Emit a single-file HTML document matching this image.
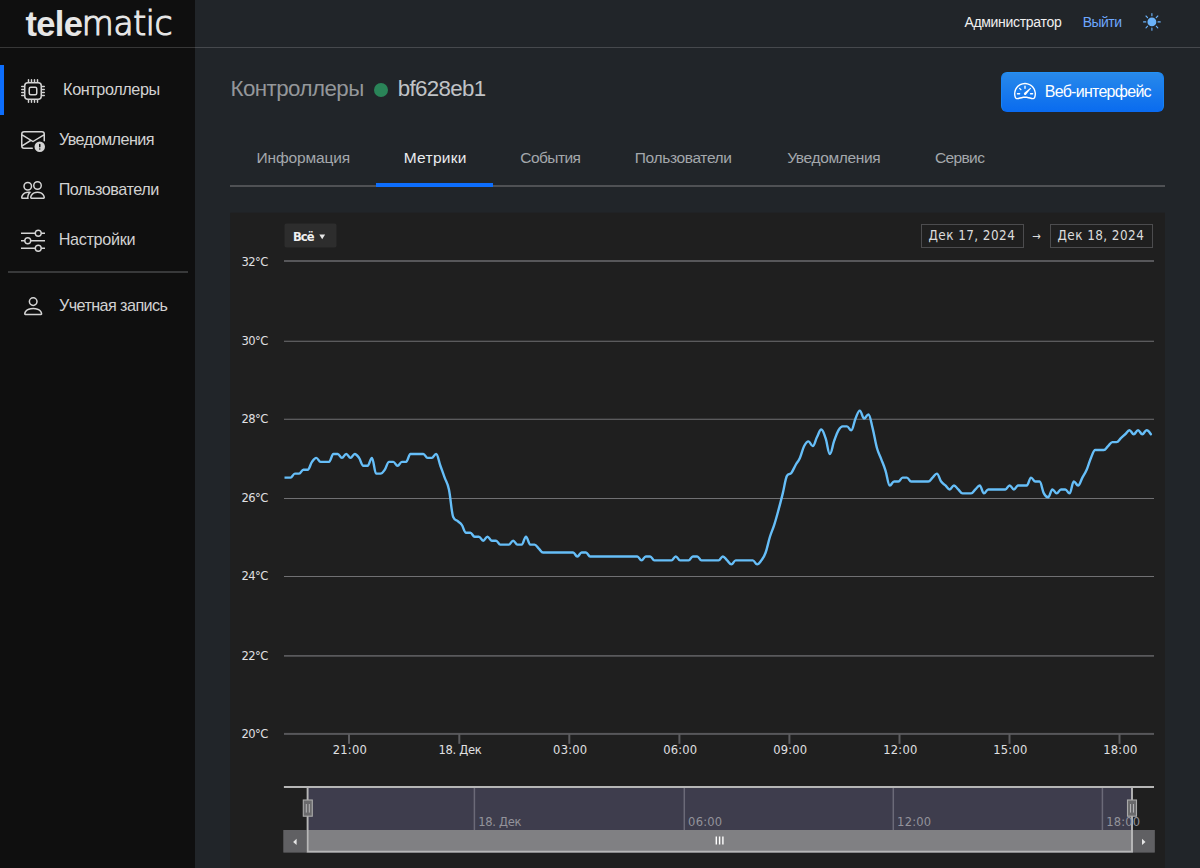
<!DOCTYPE html>
<html lang="ru"><head><meta charset="utf-8"><title>telematic — Контроллеры bf628eb1</title>
<style>
*{box-sizing:border-box}
html,body{margin:0;padding:0}
body{width:1200px;height:868px;overflow:hidden;background:#212529;font-family:'Liberation Sans', sans-serif;color:#dee2e6;position:relative}
.t{position:absolute;white-space:pre;line-height:1;}
.ic{position:absolute;display:block}
.sidebar{position:absolute;left:0;top:0;width:195.2px;height:868px;background:#0f0f0f}
.topline{position:absolute;left:0;top:46.6px;width:1200px;height:1.6px;background:rgba(255,255,255,.17)}
.active-bar{position:absolute;left:0;top:65px;width:3.7px;height:50px;background:#0d6efd}
.sep{position:absolute;left:8px;top:270.9px;width:180px;height:1.7px;background:#38393a}
.nav-t{color:#d2d2d2}
.adm{color:#f0f0f0}
.out{color:#6ea8fe}
.h1a{color:#94979a}
.h1b{color:#c0c3c6}
.dot{position:absolute;left:373.5px;top:82.9px;width:14px;height:14px;border-radius:50%;background:#2a8458}
.btn{position:absolute;left:1001px;top:72.4px;width:163.2px;height:39.8px;border-radius:6px;background:linear-gradient(#2889ea,#0a6cef);border:1px solid;border-color:#2191f7 #1783f5 #0a6af2}
.tabs-line{position:absolute;left:230px;top:185.3px;width:935px;height:1.8px;background:#4f5154}
.tab-active{position:absolute;left:376.4px;top:183.1px;width:116.4px;height:3.8px;background:#0d6efd}
.tab{color:#a4a8ac}
.tab.on{color:#e9ecef}
.panel{position:absolute;left:230px;top:212px;width:935px;height:700px}
.hc{display:block}
.hc text{font-family:'DejaVu Sans', sans-serif;}
.hc .ax{font-size:12.8px;font-stretch:condensed;fill:#e0e0e3}
.hc .nav{font-size:12.8px;font-stretch:condensed;fill:#93939b}
.hc .inp{font-size:13.4px;font-stretch:condensed;fill:#dcdcdc}
.hc .rsb{font-size:12.8px;font-stretch:condensed;font-weight:bold;fill:#f0f0f0}
.logo{color:#e6e6e6}
</style></head><body>
<aside class="sidebar">
<a class="brand"><span class="t logo" style="left:25.50px;top:6.90px;font:bold 34.5px/1 'Liberation Sans', sans-serif;letter-spacing:-0.700px;">tele</span><span class="t logo" style="left:81.80px;top:8.35px;font:200 32.8px/1 'DejaVu Sans', sans-serif;letter-spacing:-0.350px;-webkit-text-stroke:1.2px #e6e6e6">matic</span></a>
<nav>
<div class="active-bar"></div>
<svg class="ic" style="left:21px;top:79.4px" width="24" height="24" viewBox="0 0 16 16" fill="#d4d4d4"><path d="M5 0a.5.5 0 0 1 .5.5V2h1V.5a.5.5 0 0 1 1 0V2h1V.5a.5.5 0 0 1 1 0V2h1V.5a.5.5 0 0 1 1 0V2A2.5 2.5 0 0 1 14 4.5h1.5a.5.5 0 0 1 0 1H14v1h1.5a.5.5 0 0 1 0 1H14v1h1.5a.5.5 0 0 1 0 1H14v1h1.5a.5.5 0 0 1 0 1H14a2.5 2.5 0 0 1-2.5 2.5v1.5a.5.5 0 0 1-1 0V14h-1v1.5a.5.5 0 0 1-1 0V14h-1v1.5a.5.5 0 0 1-1 0V14h-1v1.5a.5.5 0 0 1-1 0V14A2.5 2.5 0 0 1 2 11.5H.5a.5.5 0 0 1 0-1H2v-1H.5a.5.5 0 0 1 0-1H2v-1H.5a.5.5 0 0 1 0-1H2v-1H.5a.5.5 0 0 1 0-1H2A2.5 2.5 0 0 1 4.5 2V.5A.5.5 0 0 1 5 0m-.5 3A1.5 1.5 0 0 0 3 4.5v7A1.5 1.5 0 0 0 4.5 13h7a1.5 1.5 0 0 0 1.5-1.5v-7A1.5 1.5 0 0 0 11.5 3zM5 6.5A1.5 1.5 0 0 1 6.5 5h3A1.5 1.5 0 0 1 11 6.5v3A1.5 1.5 0 0 1 9.5 11h-3A1.5 1.5 0 0 1 5 9.5zM6.5 6a.5.5 0 0 0-.5.5v3a.5.5 0 0 0 .5.5h3a.5.5 0 0 0 .5-.5v-3a.5.5 0 0 0-.5-.5z"/></svg><span class="t nav-t" style="left:63.10px;top:80.99px;font:normal 16.2px/1 'Liberation Sans', sans-serif;letter-spacing:-0.390px;">Контроллеры</span>
<svg class="ic" style="left:21px;top:128px" width="24" height="24" viewBox="0 0 16 16" fill="#d4d4d4"><path d="M2 2a2 2 0 0 0-2 2v8.01A2 2 0 0 0 2 14h5.5a.5.5 0 0 0 0-1H2a1 1 0 0 1-.966-.741l5.64-3.471L8 9.583l7-4.2V8.5a.5.5 0 0 0 1 0V4a2 2 0 0 0-2-2zm3.708 6.208L1 11.105V5.383zM1 4.217V4a1 1 0 0 1 1-1h12a1 1 0 0 1 1 1v.217l-7 4.2z"/><path d="M12.5 16a3.5 3.5 0 1 0 0-7 3.5 3.5 0 0 0 0 7m.5-5v1.5a.5.5 0 0 1-1 0V11a.5.5 0 0 1 1 0m0 3a.5.5 0 1 1-1 0 .5.5 0 0 1 1 0"/></svg><span class="t nav-t" style="left:58.90px;top:130.99px;font:normal 16.2px/1 'Liberation Sans', sans-serif;letter-spacing:-0.550px;">Уведомления</span>
<svg class="ic" style="left:21px;top:177.8px" width="24" height="24" viewBox="0 0 16 16" fill="#d4d4d4"><path d="M15 14s1 0 1-1-1-4-5-4-5 3-5 4 1 1 1 1zm-7.978-1L7 12.996c.001-.264.167-1.03.76-1.72C8.312 10.629 9.282 10 11 10c1.717 0 2.687.63 3.24 1.276.593.69.758 1.457.76 1.72l-.008.002-.014.002zM11 7a2 2 0 1 0 0-4 2 2 0 0 0 0 4m3-2a3 3 0 1 1-6 0 3 3 0 0 1 6 0M6.936 9.28a6 6 0 0 0-1.23-.247A7 7 0 0 0 5 9c-4 0-5 3-5 4q0 1 1 1h4.216A2.24 2.24 0 0 1 5 13c0-1.01.377-2.042 1.09-2.904.243-.294.526-.569.846-.816M4.92 10A5.5 5.5 0 0 0 4 13H1c0-.26.164-1.03.76-1.724.545-.636 1.492-1.256 3.16-1.275ZM1.5 5.5a3 3 0 1 1 6 0 3 3 0 0 1-6 0m3-2a2 2 0 1 0 0 4 2 2 0 0 0 0-4"/></svg><span class="t nav-t" style="left:58.70px;top:180.99px;font:normal 16.2px/1 'Liberation Sans', sans-serif;letter-spacing:-0.455px;">Пользователи</span>
<svg class="ic" style="left:21px;top:228.2px" width="24" height="24" viewBox="0 0 16 16" fill="#d4d4d4"><path fill-rule="evenodd" d="M11.5 2a1.5 1.5 0 1 0 0 3 1.5 1.5 0 0 0 0-3M9.05 3a2.5 2.5 0 0 1 4.9 0H16v1h-2.05a2.5 2.5 0 0 1-4.9 0H0V3zM4.5 7a1.5 1.5 0 1 0 0 3 1.5 1.5 0 0 0 0-3M2.05 8a2.5 2.5 0 0 1 4.9 0H16v1H6.95a2.5 2.5 0 0 1-4.9 0H0V8zm9.45 4a1.5 1.5 0 1 0 0 3 1.5 1.5 0 0 0 0-3m-2.45 1a2.5 2.5 0 0 1 4.9 0H16v1h-2.05a2.5 2.5 0 0 1-4.9 0H0v-1z"/></svg><span class="t nav-t" style="left:58.70px;top:230.89px;font:normal 16.2px/1 'Liberation Sans', sans-serif;letter-spacing:-0.325px;">Настройки</span>
<div class="sep"></div>
<svg class="ic" style="left:20.7px;top:294.4px" width="24.4" height="24.4" viewBox="0 0 16 16" fill="#d4d4d4"><path d="M8 8a3 3 0 1 0 0-6 3 3 0 0 0 0 6m2-3a2 2 0 1 1-4 0 2 2 0 0 1 4 0m4 8c0 1-1 1-1 1H3s-1 0-1-1 1-4 6-4 6 3 6 4m-1-.004c-.001-.246-.154-.986-.832-1.664C11.516 10.68 10.289 10 8 10s-3.516.68-4.168 1.332c-.678.678-.83 1.418-.832 1.664z"/></svg><span class="t nav-t" style="left:59.00px;top:296.69px;font:normal 16.2px/1 'Liberation Sans', sans-serif;letter-spacing:-0.585px;">Учетная запись</span>
</nav></aside>
<header>
<span class="t adm" style="left:964.40px;top:15.25px;font:normal 14.0px/1 'Liberation Sans', sans-serif;letter-spacing:-0.308px;">Администратор</span><span class="t out" style="left:1082.80px;top:15.25px;font:normal 14.0px/1 'Liberation Sans', sans-serif;letter-spacing:-0.575px;">Выйти</span><svg class="ic" style="left:1143.2px;top:12.8px" width="17.8" height="17.8" viewBox="0 0 16 16" fill="#6bb3fa"><path d="M12 8a4 4 0 1 1-8 0 4 4 0 0 1 8 0M8 0a.5.5 0 0 1 .5.5v2a.5.5 0 0 1-1 0v-2A.5.5 0 0 1 8 0m0 13a.5.5 0 0 1 .5.5v2a.5.5 0 0 1-1 0v-2A.5.5 0 0 1 8 13m8-5a.5.5 0 0 1-.5.5h-2a.5.5 0 0 1 0-1h2a.5.5 0 0 1 .5.5M3 8a.5.5 0 0 1-.5.5h-2a.5.5 0 0 1 0-1h2A.5.5 0 0 1 3 8m10.657-5.657a.5.5 0 0 1 0 .707l-1.414 1.415a.5.5 0 1 1-.707-.708l1.414-1.414a.5.5 0 0 1 .707 0m-9.193 9.193a.5.5 0 0 1 0 .707L3.05 13.657a.5.5 0 0 1-.707-.707l1.414-1.414a.5.5 0 0 1 .707 0m9.193 2.121a.5.5 0 0 1-.707 0l-1.414-1.414a.5.5 0 0 1 .707-.707l1.414 1.414a.5.5 0 0 1 0 .707M4.464 4.465a.5.5 0 0 1-.707 0L2.343 3.05a.5.5 0 1 1 .707-.707l1.414 1.414a.5.5 0 0 1 0 .708"/></svg>
</header>
<div class="topline"></div>
<main>
<h1 style="margin:0"><span class="t h1a" style="left:230.50px;top:78.02px;font:normal 22.3px/1 'Liberation Sans', sans-serif;letter-spacing:-0.540px;font-weight:normal">Контроллеры</span><i class="dot"></i><span class="t h1b" style="left:397.80px;top:78.02px;font:normal 22.3px/1 'Liberation Sans', sans-serif;letter-spacing:-0.657px;font-weight:normal">bf628eb1</span></h1>
<a><i class="btn"></i><svg class="ic" style="left:1014.2px;top:80.3px" width="22" height="22" viewBox="0 0 16 16" fill="#ffffff"><path d="M8 4a.5.5 0 0 1 .5.5V6a.5.5 0 0 1-1 0V4.5A.5.5 0 0 1 8 4M3.732 5.732a.5.5 0 0 1 .707 0l.915.914a.5.5 0 1 1-.708.708l-.914-.915a.5.5 0 0 1 0-.707M2 10a.5.5 0 0 1 .5-.5h1.586a.5.5 0 0 1 0 1H2.5A.5.5 0 0 1 2 10m9.5 0a.5.5 0 0 1 .5-.5h1.5a.5.5 0 0 1 0 1H12a.5.5 0 0 1-.5-.5m.754-4.246a.39.39 0 0 0-.527-.02L7.547 9.31a.91.91 0 1 0 1.302 1.258l3.434-4.297a.39.39 0 0 0-.029-.518z"/><path fill-rule="evenodd" d="M0 10a8 8 0 1 1 15.547 2.661c-.442 1.253-1.845 1.602-2.932 1.25C11.309 13.488 9.475 13 8 13c-1.474 0-3.31.488-4.615.911-1.087.352-2.49.003-2.932-1.25A8 8 0 0 1 0 10m8-7a7 7 0 0 0-6.603 9.329c.203.575.923.876 1.68.63C4.397 12.533 6.358 12 8 12s3.604.532 4.923.96c.757.245 1.477-.056 1.68-.631A7 7 0 0 0 8 3"/></svg><span class="t " style="left:1044.70px;top:84.26px;font:normal 16.0px/1 'Liberation Sans', sans-serif;letter-spacing:-0.725px;color:#fff">Веб-интерфейс</span></a>
<nav class="tabs">
<span class="t tab" style="left:256.50px;top:149.98px;font:normal 15.5px/1 'Liberation Sans', sans-serif;letter-spacing:-0.144px;">Информация</span>
<span class="t tab on" style="left:403.70px;top:149.98px;font:normal 15.5px/1 'Liberation Sans', sans-serif;letter-spacing:0.300px;">Метрики</span>
<span class="t tab" style="left:520.30px;top:149.98px;font:normal 15.5px/1 'Liberation Sans', sans-serif;letter-spacing:-0.550px;">События</span>
<span class="t tab" style="left:634.80px;top:149.98px;font:normal 15.5px/1 'Liberation Sans', sans-serif;letter-spacing:-0.364px;">Пользователи</span>
<span class="t tab" style="left:787.20px;top:149.98px;font:normal 15.5px/1 'Liberation Sans', sans-serif;letter-spacing:-0.350px;">Уведомления</span>
<span class="t tab" style="left:935.00px;top:149.98px;font:normal 15.5px/1 'Liberation Sans', sans-serif;letter-spacing:-0.640px;">Сервис</span>
<div class="tabs-line"></div><div class="tab-active"></div></nav>
<section class="panel"><svg class="hc" width="935" height="700" viewBox="230 212 935 700">
<rect x="230.2" y="212.7" width="934.8" height="700" fill="#1f1f1f"/>
<rect x="284" y="260.0" width="870" height="2" fill="#57575a"/>
<rect x="284" y="340.75" width="870" height="1" fill="#707073"/>
<rect x="284" y="418.75" width="870" height="1" fill="#707073"/>
<rect x="284" y="498.0" width="870" height="1" fill="#707073"/>
<rect x="284" y="576.0" width="870" height="1" fill="#707073"/>
<rect x="284" y="655.2" width="870" height="1.4" fill="#68686b"/>
<rect x="284" y="732.9" width="870" height="2" fill="#57575a"/>
<text x="241.5" y="266" class="ax" textLength="26.9">32°C</text>
<text x="241.5" y="345.25" class="ax" textLength="26.9">30°C</text>
<text x="241.5" y="423.25" class="ax" textLength="26.9">28°C</text>
<text x="241.5" y="502.25" class="ax" textLength="26.9">26°C</text>
<text x="241.5" y="580.25" class="ax" textLength="26.9">24°C</text>
<text x="241.5" y="659.65" class="ax" textLength="26.9">22°C</text>
<text x="241.5" y="737.65" class="ax" textLength="26.9">20°C</text>
<rect x="348.0" y="734" width="2" height="9.8" fill="#5c5c5f"/>
<text x="332.8" y="753.9" class="ax" textLength="34">21:00</text>
<rect x="458.3" y="734" width="2" height="9.8" fill="#5c5c5f"/>
<text x="438.5" y="753.9" class="ax" textLength="43.2">18. Дек</text>
<rect x="568.3" y="734" width="2" height="9.8" fill="#5c5c5f"/>
<text x="553.1" y="753.9" class="ax" textLength="34">03:00</text>
<rect x="678.4" y="734" width="2" height="9.8" fill="#5c5c5f"/>
<text x="663.2" y="753.9" class="ax" textLength="34">06:00</text>
<rect x="788.4" y="734" width="2" height="9.8" fill="#5c5c5f"/>
<text x="773.2" y="753.9" class="ax" textLength="34">09:00</text>
<rect x="898.5" y="734" width="2" height="9.8" fill="#5c5c5f"/>
<text x="883.3" y="753.9" class="ax" textLength="34">12:00</text>
<rect x="1008.5" y="734" width="2" height="9.8" fill="#5c5c5f"/>
<text x="993.3" y="753.9" class="ax" textLength="34">15:00</text>
<rect x="1118.5" y="734" width="2" height="9.8" fill="#5c5c5f"/>
<text x="1103.3" y="753.9" class="ax" textLength="34">18:00</text>
<clipPath id="plotclip"><rect x="284.5" y="255" width="869.5" height="485"/></clipPath>
<path d="M282.02 477.61C282.02 477.61 284.59 477.61 286.30 477.61C288.01 477.61 288.87 477.61 290.58 477.61C292.29 477.61 293.15 473.67 294.86 473.67C296.57 473.67 297.43 473.67 299.14 473.67C300.85 473.67 301.71 469.73 303.42 469.73C305.13 469.73 305.99 469.73 307.70 469.73C309.41 469.73 310.27 464.21 311.98 461.84C313.69 459.48 314.55 457.90 316.26 457.90C317.97 457.90 318.83 461.84 320.54 461.84C322.25 461.84 323.11 461.84 324.82 461.84C326.53 461.84 327.39 461.84 329.10 461.84C330.81 461.84 331.67 453.96 333.38 453.96C335.09 453.96 335.95 453.96 337.66 453.96C339.37 453.96 340.23 457.90 341.94 457.90C343.65 457.90 344.51 453.96 346.22 453.96C347.93 453.96 348.79 457.90 350.50 457.90C352.21 457.90 353.07 453.96 354.78 453.96C356.49 453.96 357.35 455.53 359.06 457.90C360.77 460.27 361.63 465.78 363.34 465.78C365.05 465.78 365.91 465.78 367.62 465.78C369.33 465.78 370.19 457.90 371.90 457.90C373.61 457.90 374.47 473.67 376.18 473.67C377.89 473.67 378.75 473.67 380.46 473.67C382.17 473.67 383.03 472.09 384.74 469.73C386.45 467.36 387.31 461.84 389.02 461.84C390.73 461.84 391.59 461.84 393.30 461.84C395.01 461.84 395.87 465.78 397.58 465.78C399.29 465.78 400.15 461.84 401.86 461.84C403.57 461.84 404.43 461.84 406.14 461.84C407.85 461.84 408.71 453.96 410.42 453.96C412.13 453.96 412.99 453.96 414.70 453.96C416.41 453.96 417.27 453.96 418.98 453.96C420.69 453.96 421.55 453.96 423.26 453.96C424.97 453.96 425.83 457.90 427.54 457.90C429.25 457.90 430.11 457.90 431.82 457.90C433.53 457.90 434.39 453.96 436.10 453.96C437.81 453.96 438.67 461.05 440.38 465.78C442.09 470.51 442.95 472.88 444.66 477.61C446.37 482.34 447.23 481.55 448.94 489.44C450.65 497.32 451.51 513.09 453.22 517.03C454.93 520.97 455.79 519.40 457.50 520.97C459.21 522.55 460.07 522.55 461.78 524.91C463.49 527.28 464.35 532.80 466.06 532.80C467.77 532.80 468.63 532.80 470.34 532.80C472.05 532.80 472.91 536.74 474.62 536.74C476.33 536.74 477.19 536.74 478.90 536.74C480.61 536.74 481.47 540.68 483.18 540.68C484.89 540.68 485.75 536.74 487.46 536.74C489.17 536.74 490.03 540.68 491.74 540.68C493.45 540.68 494.31 540.68 496.02 540.68C497.73 540.68 498.59 544.62 500.30 544.62C502.01 544.62 502.87 544.62 504.58 544.62C506.29 544.62 507.15 544.62 508.86 544.62C510.57 544.62 511.43 540.68 513.14 540.68C514.85 540.68 515.71 544.62 517.42 544.62C519.13 544.62 519.99 544.62 521.70 544.62C523.41 544.62 524.27 536.74 525.98 536.74C527.69 536.74 528.55 544.62 530.26 544.62C531.97 544.62 532.83 544.62 534.54 544.62C536.25 544.62 537.11 546.99 538.82 548.57C540.53 550.14 541.39 552.51 543.10 552.51C544.81 552.51 545.67 552.51 547.38 552.51C549.09 552.51 549.95 552.51 551.66 552.51C553.37 552.51 554.23 552.51 555.94 552.51C557.65 552.51 558.51 552.51 560.22 552.51C561.93 552.51 562.79 552.51 564.50 552.51C566.21 552.51 567.07 552.51 568.78 552.51C570.49 552.51 571.35 552.51 573.06 552.51C574.77 552.51 575.63 556.45 577.34 556.45C579.05 556.45 579.91 552.51 581.62 552.51C583.33 552.51 584.19 552.51 585.90 552.51C587.61 552.51 588.47 556.45 590.18 556.45C591.89 556.45 592.75 556.45 594.46 556.45C596.17 556.45 597.03 556.45 598.74 556.45C600.45 556.45 601.31 556.45 603.02 556.45C604.73 556.45 605.59 556.45 607.30 556.45C609.01 556.45 609.87 556.45 611.58 556.45C613.29 556.45 614.15 556.45 615.86 556.45C617.57 556.45 618.43 556.45 620.14 556.45C621.85 556.45 622.71 556.45 624.42 556.45C626.13 556.45 626.99 556.45 628.70 556.45C630.41 556.45 631.27 556.45 632.98 556.45C634.69 556.45 635.55 556.45 637.26 556.45C638.97 556.45 639.83 560.39 641.54 560.39C643.25 560.39 644.11 556.45 645.82 556.45C647.53 556.45 648.39 556.45 650.10 556.45C651.81 556.45 652.67 560.39 654.38 560.39C656.09 560.39 656.95 560.39 658.66 560.39C660.37 560.39 661.23 560.39 662.94 560.39C664.65 560.39 665.51 560.39 667.22 560.39C668.93 560.39 669.79 560.39 671.50 560.39C673.21 560.39 674.07 556.45 675.78 556.45C677.49 556.45 678.35 560.39 680.06 560.39C681.77 560.39 682.63 560.39 684.34 560.39C686.05 560.39 686.91 560.39 688.62 560.39C690.33 560.39 691.19 556.45 692.90 556.45C694.61 556.45 695.47 556.45 697.18 556.45C698.89 556.45 699.75 560.39 701.46 560.39C703.17 560.39 704.03 560.39 705.74 560.39C707.45 560.39 708.31 560.39 710.02 560.39C711.73 560.39 712.59 560.39 714.30 560.39C716.01 560.39 716.87 560.39 718.58 560.39C720.29 560.39 721.15 556.45 722.86 556.45C724.57 556.45 725.43 558.82 727.14 560.39C728.85 561.97 729.71 564.33 731.42 564.33C733.13 564.33 733.99 560.39 735.70 560.39C737.41 560.39 738.27 560.39 739.98 560.39C741.69 560.39 742.55 560.39 744.26 560.39C745.97 560.39 746.83 560.39 748.54 560.39C750.25 560.39 751.11 560.39 752.82 560.39C754.53 560.39 755.39 564.33 757.10 564.33C758.81 564.33 759.67 562.76 761.38 560.39C763.09 558.03 763.95 557.24 765.66 552.51C767.37 547.78 768.23 542.26 769.94 536.74C771.65 531.22 772.51 530.28 774.22 524.91C775.93 519.55 776.79 516.24 778.50 509.93C780.21 503.63 781.07 500.24 782.78 493.38C784.49 486.52 785.35 478.40 787.06 475.64C788.77 472.88 789.63 475.01 791.34 472.88C793.05 470.75 793.91 467.99 795.62 465.00C797.33 462.00 798.19 461.68 799.90 457.90C801.61 454.12 802.47 449.39 804.18 446.07C805.89 442.76 806.75 441.34 808.46 441.34C810.17 441.34 811.03 446.07 812.74 446.07C814.45 446.07 815.31 440.32 817.02 437.01C818.73 433.70 819.59 429.52 821.30 429.52C823.01 429.52 823.87 433.30 825.58 438.19C827.29 443.08 828.15 453.96 829.86 453.96C831.57 453.96 832.43 445.68 834.14 440.95C835.85 436.22 836.71 433.22 838.42 430.31C840.13 427.39 840.99 426.36 842.70 426.36C844.41 426.36 845.27 426.36 846.98 426.36C848.69 426.36 849.55 430.31 851.26 430.31C852.97 430.31 853.83 422.42 855.54 418.48C857.25 414.54 858.11 410.60 859.82 410.60C861.53 410.60 862.39 418.48 864.10 418.48C865.81 418.48 866.67 414.54 868.38 414.54C870.09 414.54 870.95 421.63 872.66 428.34C874.37 435.04 875.23 441.90 876.94 448.05C878.65 454.19 879.51 454.59 881.22 459.08C882.93 463.58 883.79 465.23 885.50 470.51C887.21 475.80 888.07 485.49 889.78 485.49C891.49 485.49 892.35 481.55 894.06 481.55C895.77 481.55 896.63 481.55 898.34 481.55C900.05 481.55 900.91 477.61 902.62 477.61C904.33 477.61 905.19 477.61 906.90 477.61C908.61 477.61 909.47 481.55 911.18 481.55C912.89 481.55 913.75 481.55 915.46 481.55C917.17 481.55 918.03 481.55 919.74 481.55C921.45 481.55 922.31 481.55 924.02 481.55C925.73 481.55 926.59 481.55 928.30 481.55C930.01 481.55 930.87 479.19 932.58 477.61C934.29 476.03 935.15 473.67 936.86 473.67C938.57 473.67 939.43 479.19 941.14 481.55C942.85 483.92 943.71 483.92 945.42 485.49C947.13 487.07 947.99 489.44 949.70 489.44C951.41 489.44 952.27 485.49 953.98 485.49C955.69 485.49 956.55 487.86 958.26 489.44C959.97 491.01 960.83 493.38 962.54 493.38C964.25 493.38 965.11 493.38 966.82 493.38C968.53 493.38 969.39 493.38 971.10 493.38C972.81 493.38 973.67 491.01 975.38 489.44C977.09 487.86 977.95 485.49 979.66 485.49C981.37 485.49 982.23 493.38 983.94 493.38C985.65 493.38 986.51 489.44 988.22 489.44C989.93 489.44 990.79 489.44 992.50 489.44C994.21 489.44 995.07 489.44 996.78 489.44C998.49 489.44 999.35 489.44 1001.06 489.44C1002.77 489.44 1003.63 489.44 1005.34 489.44C1007.05 489.44 1007.91 485.49 1009.62 485.49C1011.33 485.49 1012.19 489.44 1013.90 489.44C1015.61 489.44 1016.47 485.49 1018.18 485.49C1019.89 485.49 1020.75 485.49 1022.46 485.49C1024.17 485.49 1025.03 485.49 1026.74 485.49C1028.45 485.49 1029.31 477.61 1031.02 477.61C1032.73 477.61 1033.59 481.55 1035.30 481.55C1037.01 481.55 1037.87 481.55 1039.58 481.55C1041.29 481.55 1042.15 490.22 1043.86 493.38C1045.57 496.53 1046.43 497.32 1048.14 497.32C1049.85 497.32 1050.71 489.44 1052.42 489.44C1054.13 489.44 1054.99 493.38 1056.70 493.38C1058.41 493.38 1059.27 489.44 1060.98 489.44C1062.69 489.44 1063.55 489.44 1065.26 489.44C1066.97 489.44 1067.83 493.38 1069.54 493.38C1071.25 493.38 1072.11 481.55 1073.82 481.55C1075.53 481.55 1076.39 485.49 1078.10 485.49C1079.81 485.49 1080.67 480.76 1082.38 477.61C1084.09 474.46 1084.95 473.67 1086.66 469.73C1088.37 465.78 1089.23 461.84 1090.94 457.90C1092.65 453.96 1093.51 450.02 1095.22 450.02C1096.93 450.02 1097.79 450.02 1099.50 450.02C1101.21 450.02 1102.07 450.02 1103.78 450.02C1105.49 450.02 1106.35 447.65 1108.06 446.07C1109.77 444.50 1110.63 442.13 1112.34 442.13C1114.05 442.13 1114.91 442.13 1116.62 442.13C1118.33 442.13 1119.19 439.77 1120.90 438.19C1122.61 436.61 1123.47 435.82 1125.18 434.25C1126.89 432.67 1127.75 430.31 1129.46 430.31C1131.17 430.31 1132.03 434.25 1133.74 434.25C1135.45 434.25 1136.31 430.31 1138.02 430.31C1139.73 430.31 1140.59 434.25 1142.30 434.25C1144.01 434.25 1144.87 430.31 1146.58 430.31C1148.29 430.31 1150.86 434.25 1150.86 434.25" fill="none" stroke="#66bef8" stroke-width="2.4" stroke-linejoin="round" stroke-linecap="round" clip-path="url(#plotclip)"/>
<rect x="284.5" y="223.5" width="52" height="24" rx="2" fill="#2d2d2d"/>
<text x="293" y="240.5" class="rsb" textLength="21.5">Всё</text>
<path d="M319.3 234.6h5.8l-2.9 4.6z" fill="#e6e6e6"/>
<rect x="921.5" y="224.5" width="102" height="23" fill="#1f1f1f" stroke="#4c4c4e" stroke-width="1"/>
<text x="928.5" y="240.3" class="inp" textLength="86.3">Дек 17, 2024</text>
<rect x="1050.5" y="224.5" width="102" height="23" fill="#1f1f1f" stroke="#4c4c4e" stroke-width="1"/>
<text x="1057.5" y="240.3" class="inp" textLength="86.3">Дек 18, 2024</text>
<text x="1036.6" y="240" class="inp" style="font-size:11.5px" text-anchor="middle">→</text>
<rect x="307.5" y="788" width="824.5" height="42" fill="#3e3d4d"/>
<rect x="473.65" y="788" width="1.5" height="42" fill="#6b6a78"/>
<rect x="683.55" y="788" width="1.5" height="42" fill="#6b6a78"/>
<rect x="892.55" y="788" width="1.5" height="42" fill="#6b6a78"/>
<rect x="1101.65" y="788" width="1.5" height="42" fill="#6b6a78"/>
<path d="M283.9 787H1154M307.6 787V852M1132 787V852" stroke="#b6b6b6" stroke-width="1.9" fill="none"/>
<text x="478.2" y="825.6" class="nav" textLength="43.2">18. Дек</text>
<text x="688.0999999999999" y="825.6" class="nav" textLength="34">06:00</text>
<text x="897.0999999999999" y="825.6" class="nav" textLength="34">12:00</text>
<text x="1106.2" y="825.6" class="nav" textLength="34">18:00</text>
<rect x="283.4" y="830" width="871" height="22.5" fill="#404043"/>
<rect x="306.5" y="830" width="826.5" height="22.5" fill="#808083"/>
<path d="M307.6 830V851.6H1132V830" stroke="#b8b8b8" stroke-width="1.9" fill="none"/>
<rect x="283.4" y="830" width="23.1" height="22.5" fill="#606063"/>
<rect x="1133" y="830" width="21.8" height="22.5" fill="#606063"/>
<path d="M296.6 838.8v6.2l-3.5-3.1z" fill="#e4e4e4"/>
<path d="M1142 838.8v6.2l3.5-3.1z" fill="#e4e4e4"/>
<path d="M716.3 836.5v8M719.6 836.5v8M722.9 836.5v8" stroke="#fff" stroke-width="1.4"/>
<rect x="303.3" y="800" width="9" height="16.2" fill="#6a6a6c" stroke="#aaaaaa" stroke-width="1.1"/>
<path d="M306.3 804v8.6M309.3 804v8.6" stroke="#b4b4b6" stroke-width="1"/>
<rect x="1127.5" y="800" width="9" height="16.2" fill="#6a6a6c" stroke="#aaaaaa" stroke-width="1.1"/>
<path d="M1130.5 804v8.6M1133.5 804v8.6" stroke="#b4b4b6" stroke-width="1"/>
</svg></section>
</main></body></html>
